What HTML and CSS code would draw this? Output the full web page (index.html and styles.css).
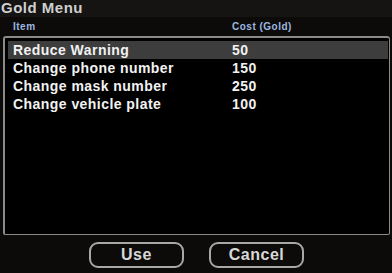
FILE: index.html
```html
<!DOCTYPE html>
<html>
<head>
<meta charset="utf-8">
<link rel="stylesheet" href="styles.css">
</head>
<body>
<div class="window">
  <div class="titlebar">Gold Menu</div>
  <div class="content">
    <div class="cols">
      <span class="col-item">Item</span>
      <span class="col-cost">Cost (Gold)</span>
    </div>
    <div class="list">
      <div class="row selected"><span class="name">Reduce Warning</span><span class="cost">50</span></div>
      <div class="row"><span class="name">Change phone number</span><span class="cost">150</span></div>
      <div class="row"><span class="name">Change mask number</span><span class="cost">250</span></div>
      <div class="row"><span class="name">Change vehicle plate</span><span class="cost">100</span></div>
    </div>
    <div class="buttons">
      <button class="btn">Use</button>
      <button class="btn">Cancel</button>
    </div>
  </div>
</div>
</body>
</html>
```
FILE: styles.css
```css
html, body {
  margin: 0;
  padding: 0;
  background: #0d0b09;
}
.window {
  width: 392px;
  height: 273px;
  display: flex;
  flex-direction: column;
  font-family: "Liberation Sans", Arial, sans-serif;
  font-weight: bold;
}
.titlebar {
  height: 17px;
  background: #151413;
  color: #cfcfcf;
  font-size: 15px;
  line-height: 15px;
  letter-spacing: 0.5px;
  padding-left: 1px;
}
.content {
  flex: 1;
  display: flex;
  flex-direction: column;
  padding: 0 2px 0 3px;
}
.cols {
  display: flex;
  height: 19px;
  align-items: center;
  font-size: 10px;
  letter-spacing: 0.5px;
  color: #9db8e0;
}
.col-item {
  width: 229px;
  padding-left: 10px;
  box-sizing: border-box;
}
.list {
  height: 199px;
  box-sizing: border-box;
  background: #000;
  border: 1px solid #8a8a8a;
  border-left-width: 2px;
  border-top-width: 2px;
  border-radius: 3px 3px 2px 2px;
  padding: 3px 1px 0 3px;
}
.row {
  display: flex;
  height: 18px;
  align-items: center;
  color: #f2f2f2;
  font-size: 14px;
  letter-spacing: 0.45px;
}
.row.selected {
  background: #3d3d3d;
}
.name {
  width: 224px;
  padding-left: 5px;
  box-sizing: border-box;
}
.buttons {
  display: flex;
  justify-content: center;
  gap: 25px;
  padding-top: 7px;
}
.btn {
  width: 95px;
  height: 26px;
  background: transparent;
  border: 2px solid #a8a8a8;
  border-radius: 9px;
  color: #d8d8d8;
  font-family: "Liberation Sans", Arial, sans-serif;
  font-weight: bold;
  font-size: 16px;
  letter-spacing: 0.5px;
  padding: 0;
}
```
